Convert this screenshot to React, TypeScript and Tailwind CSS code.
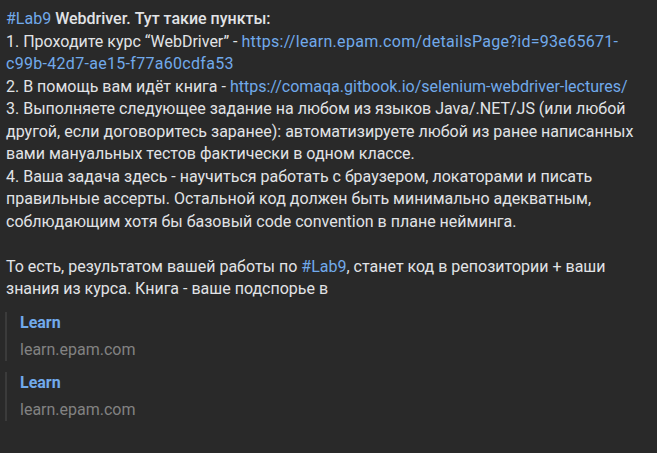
const link = "text-[#71aaeb]";

function Snippet() {
  return (
    <div className="-ml-[1px] border-l-2 border-[#3b3b3b] pl-[13px] pt-[1px] pb-[1px]">
      <div className={`text-[16px] font-bold leading-[20px] ${link}`}>Learn</div>
      <div className="mt-[7px] text-[16px] leading-[20px] text-[#828282]">learn.epam.com</div>
    </div>
  );
}

export default function App() {
  return (
    <div
      className="min-h-[453px] w-[657px] bg-[#292929] px-[6px] pt-[8px] text-[16px] leading-[22.5px] text-[#e1e3e6]"
      style={{ fontFamily: "Roboto, 'Liberation Sans', sans-serif" }}
    >
      <div className="w-[640px]">
        <span className={link}>#Lab9</span> <b className="font-medium">Webdriver. Тут такие пункты:</b>
        <br />
        1. Проходите курс “WebDriver” -{" "}
        <span className={`${link} tracking-[0.3px]`}>
          https://learn.epam.com/detailsPage?id=93e65671-c99b-42d7-ae15-f77a60cdfa53
        </span>
        <br />
        2. В помощь вам идёт книга -{" "}
        <span className={link}>https://comaqa.gitbook.io/selenium-webdriver-lectures/</span>
        <br />
        3. Выполняете следующее задание на любом из языков Java/.NET/JS (или любой другой, если
        договоритесь заранее): автоматизируете любой из ранее написанных вами мануальных тестов
        фактически в одном классе.
        <br />
        4. Ваша задача здесь - научиться работать с браузером, локаторами и писать правильные
        ассерты. Остальной код должен быть минимально адекватным, соблюдающим хотя бы базовый code
        convention в плане нейминга.
        <br />
        <br />
        То есть, результатом вашей работы по <span className={link}>#Lab9</span>, станет код в
        репозитории + ваши знания из курса. Книга - ваше подспорье в
      </div>
      <div className="mt-[11px] flex flex-col gap-[11px]">
        <Snippet />
        <Snippet />
      </div>
    </div>
  );
}
